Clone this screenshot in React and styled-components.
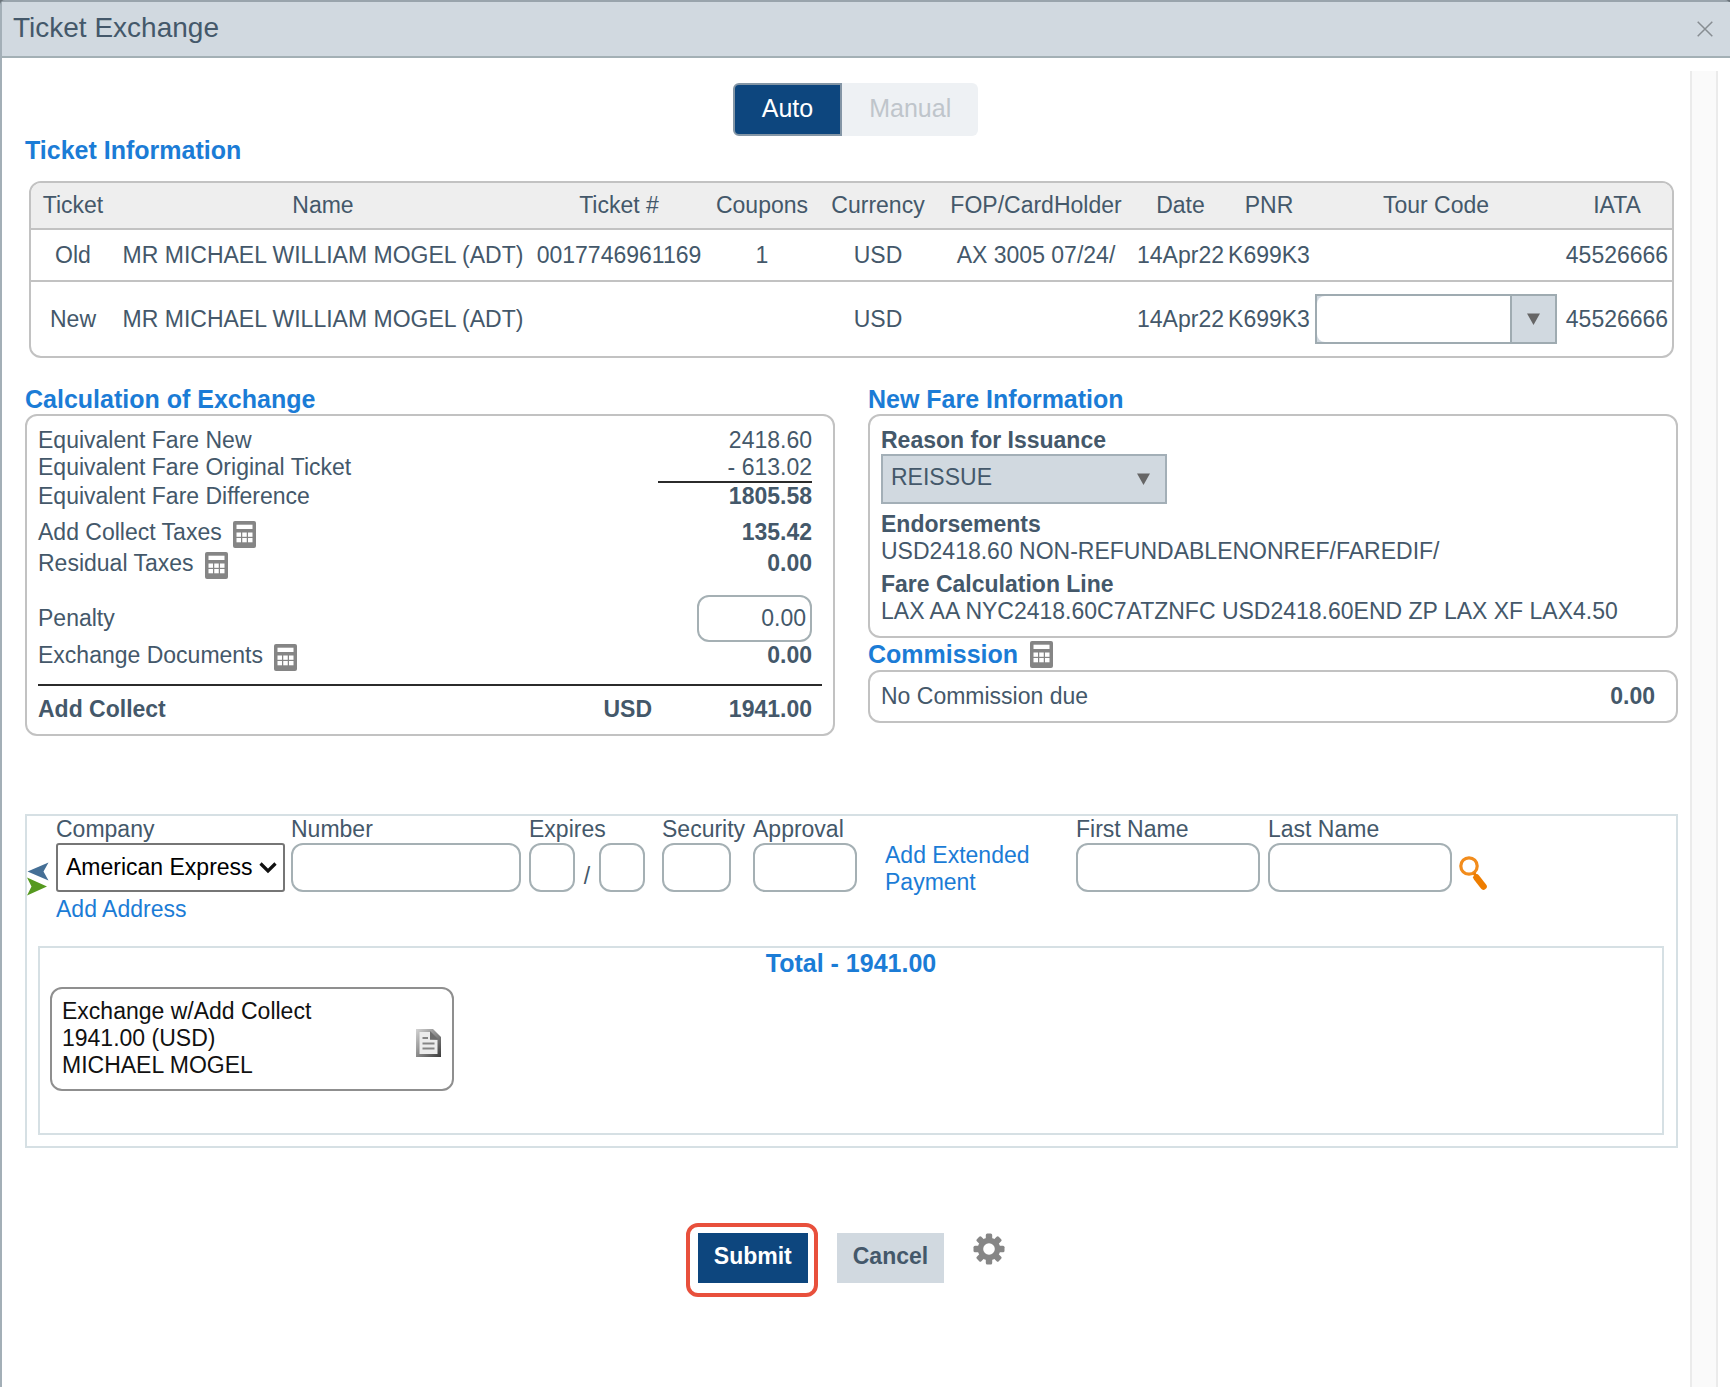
import React, { useState } from "react";
import styled, { createGlobalStyle } from "styled-components";

const ticketColumns = [
  { title: "Ticket", width: 84 },
  { title: "Name", width: 416 },
  { title: "Ticket #", width: 176 },
  { title: "Coupons", width: 110 },
  { title: "Currency", width: 122 },
  { title: "FOP/CardHolder", width: 194 },
  { title: "Date", width: 95 },
  { title: "PNR", width: 82 },
  { title: "Tour Code", width: 252 },
  { title: "IATA", width: 110 },
];

const CalculatorIcon = () => (
  <svg width="23" height="27" viewBox="0 0 23 27" aria-hidden="true">
    <rect width="23" height="27" rx="2" fill="#858585" />
    <rect x="3.5" y="3.7" width="16" height="4.3" fill="#fff" />
    {[11.5, 17].map((y) =>
      [3.5, 9.25, 15].map((x) => (
        <rect key={`${x}-${y}`} x={x} y={y} width="4.5" height="4.3" fill="#fff" />
      ))
    )}
  </svg>
);

const CloseIcon = () => (
  <svg width="16" height="16" viewBox="0 0 16 16" aria-hidden="true">
    <path d="M0.7 0.7 L15.3 15.3 M15.3 0.7 L0.7 15.3" stroke="#878d92" strokeWidth="1.5" />
  </svg>
);

const TriangleIcon = () => (
  <svg width="13" height="12" viewBox="0 0 13 12" aria-hidden="true">
    <path d="M0 0.5 H13 L6.5 12 Z" fill="#666" />
  </svg>
);

const ChevronIcon = () => (
  <svg width="18" height="12" viewBox="0 0 18 12" aria-hidden="true">
    <path d="M1.5 1.5 L9 9 L16.5 1.5" fill="none" stroke="#111" strokeWidth="3.2" />
  </svg>
);

const SwapIcon = () => (
  <svg width="22" height="34" viewBox="0 0 22 34" aria-hidden="true">
    <path d="M0.5 9.5 L21.5 0.5 L16.5 9.5 L21.5 18.5 Z" fill="#456f96" />
    <path d="M0 15.5 L20 24.5 L0 33.5 L4.5 24.5 Z" fill="#55991f" />
  </svg>
);

const SearchIcon = () => (
  <svg width="28" height="34" viewBox="0 0 28 34" aria-hidden="true">
    <circle cx="10" cy="10" r="8.2" fill="none" stroke="#f28c1c" strokeWidth="3.2" />
    <path d="M17.5 21.5 L24.5 30.5" stroke="#ee7d00" strokeWidth="6.5" strokeLinecap="round" />
    <path d="M15 17 L17.5 21" stroke="#ee7d00" strokeWidth="3" />
  </svg>
);

const DocumentIcon = () => (
  <svg width="25" height="28" viewBox="0 0 25 28" aria-hidden="true">
    <defs>
      <linearGradient id="page" x1="0" y1="0" x2="1" y2="1">
        <stop offset="0" stopColor="#d4d4d4" />
        <stop offset="0.5" stopColor="#8a8a8a" />
        <stop offset="1" stopColor="#3a3a3a" />
      </linearGradient>
    </defs>
    <path d="M0 0 H17 L25 8 V28 H0 Z" fill="url(#page)" />
    <path d="M3.5 3 H14 V11 H21.5 V25 H3.5 Z" fill="#ececec" />
    <path d="M14 2 L22 10 H14 Z" fill="#6d6d6d" />
    <path d="M6.5 9 H12 M6.5 14.5 H18.5 M6.5 19.5 H18.5" stroke="#858585" strokeWidth="2" />
  </svg>
);

const GearIcon = () => (
  <svg width="32" height="32" viewBox="-16 -16 32 32" aria-hidden="true">
    {[0, 45, 90, 135].map((angle) => (
      <rect
        key={angle}
        x="-3.2"
        y="-15.5"
        width="6.4"
        height="31"
        rx="1.5"
        fill="#868686"
        transform={`rotate(${angle})`}
      />
    ))}
    <circle r="11.3" fill="#868686" />
    <circle r="5.8" fill="#fff" />
  </svg>
);

const App = () => {
  const [penalty, setPenalty] = useState("0.00");

  return (
    <>
      <GlobalStyle />
      <Dialog>
        <Header>
          <Title>Ticket Exchange</Title>
          <IconButton aria-label="Close">
            <CloseIcon />
          </IconButton>
        </Header>
        <Body>
          <Content>
            <Toggle>
              <ToggleButton $active>Auto</ToggleButton>
              <ToggleButton disabled>Manual</ToggleButton>
            </Toggle>

            <Heading>Ticket Information</Heading>
            <TableFrame>
              <TicketTable>
                <colgroup>
                  {ticketColumns.map((col) => (
                    <col key={col.title} width={col.width} />
                  ))}
                </colgroup>
                <thead>
                  <tr>
                    {ticketColumns.map((col) => (
                      <th key={col.title}>{col.title}</th>
                    ))}
                  </tr>
                </thead>
                <tbody>
                  <TicketRow $height={52}>
                    <td>Old</td>
                    <td>MR MICHAEL WILLIAM MOGEL (ADT)</td>
                    <td>0017746961169</td>
                    <td>1</td>
                    <td>USD</td>
                    <td>AX 3005 07/24/</td>
                    <td>14Apr22</td>
                    <td>K699K3</td>
                    <td></td>
                    <td>45526666</td>
                  </TicketRow>
                  <TicketRow $height={75}>
                    <td>New</td>
                    <td>MR MICHAEL WILLIAM MOGEL (ADT)</td>
                    <td></td>
                    <td></td>
                    <td>USD</td>
                    <td></td>
                    <td>14Apr22</td>
                    <td>K699K3</td>
                    <td>
                      <Combo>
                        <ComboInput aria-label="Tour Code" />
                        <ComboButton aria-label="Show tour codes">
                          <TriangleIcon />
                        </ComboButton>
                      </Combo>
                    </td>
                    <td>45526666</td>
                  </TicketRow>
                </tbody>
              </TicketTable>
            </TableFrame>

            <Columns>
              <section>
                <Heading>Calculation of Exchange</Heading>
                <Panel>
                  <Row>
                    <span>Equivalent Fare New</span>
                    <span>2418.60</span>
                  </Row>
                  <Row>
                    <span>Equivalent Fare Original Ticket</span>
                    <span>- 613.02</span>
                  </Row>
                  <SumLine />
                  <Row>
                    <span>Equivalent Fare Difference</span>
                    <strong>1805.58</strong>
                  </Row>
                  <TaxRows>
                    <IconRow>
                      <WithIcon>
                        Add Collect Taxes
                        <IconButton aria-label="Add collect taxes calculator">
                          <CalculatorIcon />
                        </IconButton>
                      </WithIcon>
                      <strong>135.42</strong>
                    </IconRow>
                    <IconRow>
                      <WithIcon>
                        Residual Taxes
                        <IconButton aria-label="Residual taxes calculator">
                          <CalculatorIcon />
                        </IconButton>
                      </WithIcon>
                      <strong>0.00</strong>
                    </IconRow>
                  </TaxRows>
                  <PenaltyRow>
                    <label htmlFor="penalty">Penalty</label>
                    <PenaltyInput
                      id="penalty"
                      value={penalty}
                      onChange={(e) => setPenalty(e.target.value)}
                    />
                  </PenaltyRow>
                  <IconRow>
                    <WithIcon>
                      Exchange Documents
                      <IconButton aria-label="Exchange documents calculator">
                        <CalculatorIcon />
                      </IconButton>
                    </WithIcon>
                    <strong>0.00</strong>
                  </IconRow>
                  <TotalRow>
                    <TotalLabel>Add Collect</TotalLabel>
                    <span>USD</span>
                    <TotalValue>1941.00</TotalValue>
                  </TotalRow>
                </Panel>
              </section>

              <section>
                <Heading>New Fare Information</Heading>
                <Panel>
                  <FieldTitle as="label" htmlFor="reason">
                    Reason for Issuance
                  </FieldTitle>
                  <ReasonBox>
                    <ReasonSelect id="reason">
                      <option>REISSUE</option>
                    </ReasonSelect>
                    <SelectArrow $right={17}>
                      <TriangleIcon />
                    </SelectArrow>
                  </ReasonBox>
                  <FareText>
                    <FieldTitle>Endorsements</FieldTitle>
                    USD2418.60 NON-REFUNDABLENONREF/FAREDIF/
                  </FareText>
                  <FareText>
                    <FieldTitle>Fare Calculation Line</FieldTitle>
                    LAX AA NYC2418.60C7ATZNFC USD2418.60END ZP LAX XF LAX4.50
                  </FareText>
                </Panel>
                <CommissionHeading>
                  Commission
                  <IconButton aria-label="Commission calculator">
                    <CalculatorIcon />
                  </IconButton>
                </CommissionHeading>
                <Panel>
                  <Row>
                    <span>No Commission due</span>
                    <strong>0.00</strong>
                  </Row>
                </Panel>
              </section>
            </Columns>

            <Payment>
              <PaymentForm>
                <SwapButton aria-label="Swap payment">
                  <SwapIcon />
                </SwapButton>
                <Field>
                  <label htmlFor="company">Company</label>
                  <CompanyBox>
                    <CompanySelect id="company">
                      <option>American Express</option>
                    </CompanySelect>
                    <SelectArrow $right={8}>
                      <ChevronIcon />
                    </SelectArrow>
                  </CompanyBox>
                  <AddressLink href="#address">Add Address</AddressLink>
                </Field>
                <Field>
                  <label htmlFor="number">Number</label>
                  <TextInput id="number" $width={230} />
                </Field>
                <Field>
                  <label htmlFor="month">Expires</label>
                  <Expires>
                    <TextInput id="month" $width={46} />
                    <Slash>/</Slash>
                    <TextInput aria-label="Expires year" $width={46} />
                  </Expires>
                </Field>
                <Field>
                  <label htmlFor="security">Security</label>
                  <TextInput id="security" $width={69} />
                </Field>
                <Field>
                  <label htmlFor="approval">Approval</label>
                  <TextInput id="approval" $width={104} />
                </Field>
                <ExtendedLink href="#extended">
                  Add Extended
                  <br />
                  Payment
                </ExtendedLink>
                <Field>
                  <label htmlFor="first">First Name</label>
                  <TextInput id="first" $width={184} />
                </Field>
                <Field>
                  <label htmlFor="last">Last Name</label>
                  <TextInput id="last" $width={184} />
                </Field>
                <SearchButton aria-label="Search name">
                  <SearchIcon />
                </SearchButton>
              </PaymentForm>

              <Documents>
                <DocumentsTotal>Total - 1941.00</DocumentsTotal>
                <Card>
                  <div>
                    Exchange w/Add Collect
                    <br />
                    1941.00 (USD)
                    <br />
                    MICHAEL MOGEL
                  </div>
                  <CardButton aria-label="View document">
                    <DocumentIcon />
                  </CardButton>
                </Card>
              </Documents>
            </Payment>

            <Actions>
              <Highlight>
                <ActionButton $primary>Submit</ActionButton>
              </Highlight>
              <ActionButton>Cancel</ActionButton>
              <IconButton aria-label="Settings">
                <GearIcon />
              </IconButton>
            </Actions>
          </Content>
          <ScrollTrack />
        </Body>
      </Dialog>
    </>
  );
};

const GlobalStyle = createGlobalStyle`
  * {
    box-sizing: border-box;
  }
  body {
    margin: 0;
    background-color: #6c757c;
    color: #44586a;
    font-family: "Liberation Sans", Arial, Helvetica, sans-serif;
    font-size: 23px;
    line-height: 27px;
  }
  button, input, select {
    margin: 0;
    font: inherit;
    color: inherit;
  }
  svg {
    display: block;
  }
  a {
    color: #1b7cd6;
    text-decoration: none;
  }
`;

const Dialog = styled.div`
  display: flex;
  flex-direction: column;
  min-height: 100vh;
  border-top: 2px solid #99a4ac;
  border-left: 2px solid #a3afb7;
  border-radius: 5px 5px 0 0;
  background-color: #fff;
`;

const Header = styled.header`
  display: flex;
  justify-content: space-between;
  align-items: center;
  height: 56px;
  padding: 0 17px 0 11px;
  border-bottom: 2px solid #a3b0b5;
  background-color: #d1d9e0;
`;

const Title = styled.h1`
  margin: 0;
  padding-bottom: 4px;
  font-size: 28px;
  font-weight: 400;
  line-height: 31px;
`;

const IconButton = styled.button`
  flex: none;
  padding: 0;
  border: 0;
  background: none;
  cursor: pointer;
`;

const Body = styled.div`
  display: flex;
  flex: 1;
`;

const Content = styled.main`
  flex: 1;
  min-width: 0;
  padding: 25px 12px 0 23px;
`;

const ScrollTrack = styled.div`
  width: 28px;
  margin: 13px 12px 0 0;
  border: 1px solid #ebebeb;
  border-width: 0 2px;
  background-color: #fafafa;
`;

const Toggle = styled.div`
  display: flex;
  justify-content: center;
  padding-left: 8px;
`;

const ToggleButton = styled.button`
  height: 53px;
  padding: 0 27px 2px;
  border: ${(props) => (props.$active ? "2px solid #8496a6" : "0")};
  border-radius: ${(props) => (props.$active ? "6px 0 0 6px" : "0 6px 6px 0")};
  background-color: ${(props) => (props.$active ? "#0d467e" : "#eef1f4")};
  color: ${(props) => (props.$active ? "#fff" : "#bfc5cb")};
  font-size: 25px;
`;

const Heading = styled.h2`
  margin: 0;
  color: #1b7cd6;
  font-size: 25px;
  font-weight: 700;
  line-height: 29px;
`;

const TableFrame = styled.div`
  margin: 16px 4px 27px;
  border: 2px solid #c2c2c2;
  border-radius: 12px;
  overflow: hidden;
`;

const TicketTable = styled.table`
  width: 100%;
  table-layout: fixed;
  border-collapse: collapse;
  white-space: nowrap;
  text-align: center;

  th {
    height: 46px;
    padding: 0;
    background-color: #eee;
    font-weight: 400;
  }

  td {
    padding: 0;
  }
`;

const TicketRow = styled.tr`
  height: ${(props) => props.$height}px;
  border-top: 2px solid #c2c2c2;
`;

const Combo = styled.div`
  display: flex;
  height: 50px;
  margin: 0 5px;
  border: 2px solid #9fabb1;
  background-color: #d1d9e0;
`;

const ComboInput = styled.input`
  flex: 1;
  min-width: 0;
  border: 0;
  border-radius: 8px 0 0 8px;
  background-color: #fff;
`;

const ComboButton = styled.button`
  display: flex;
  justify-content: center;
  align-items: center;
  width: 45px;
  padding: 0;
  border: 0;
  border-left: 2px solid #9fabb1;
  background: none;
`;

const Columns = styled.div`
  display: grid;
  grid-template-columns: 1fr 1fr;
  gap: 33px;
  align-items: start;
`;

const Panel = styled.div`
  padding: 11px;
  border: 2px solid #c2c2c2;
  border-radius: 12px;
`;

const Row = styled.div`
  display: flex;
  justify-content: space-between;
  padding-right: 10px;
`;

const IconRow = styled(Row)`
  height: 31px;
`;

const WithIcon = styled.span`
  display: flex;
  gap: 11px;
  align-items: flex-start;

  button {
    padding-top: 2px;
  }
`;

const SumLine = styled.div`
  width: 154px;
  height: 2px;
  margin: 0 10px 0 auto;
  background-color: #2b2b2b;
`;

const TaxRows = styled.div`
  padding: 9px 0 14px;
`;

const PenaltyRow = styled(Row)`
  align-items: center;
`;

const PenaltyInput = styled.input`
  width: 115px;
  height: 47px;
  padding: 0 4px;
  border: 2px solid #a5b0b4;
  border-radius: 12px;
  text-align: right;
`;

const TotalRow = styled.div`
  display: flex;
  margin-top: 11px;
  padding: 10px 10px 0 0;
  border-top: 2px solid #2b2b2b;
  font-weight: 700;
`;

const TotalLabel = styled.span`
  flex: 1;
`;

const TotalValue = styled.span`
  width: 160px;
  text-align: right;
`;

const FieldTitle = styled.div`
  display: block;
  font-weight: 700;
`;

const ReasonBox = styled.div`
  position: relative;
  width: 286px;
  margin-bottom: 7px;
`;

const ReasonSelect = styled.select`
  display: block;
  appearance: none;
  width: 100%;
  height: 50px;
  padding: 0 40px 4px 8px;
  border: 2px solid #a3afb7;
  border-radius: 0;
  background-color: #d1d9e0;
`;

const SelectArrow = styled.span`
  position: absolute;
  top: 0;
  right: ${(props) => props.$right}px;
  display: flex;
  align-items: center;
  height: 100%;
  pointer-events: none;
`;

const FareText = styled.div`
  & + & {
    margin-top: 6px;
  }
`;

const CommissionHeading = styled(Heading)`
  display: flex;
  align-items: center;
  gap: 12px;
  height: 32px;
`;

const Payment = styled.section`
  margin-top: 78px;
  padding-bottom: 11px;
  border: 2px solid #d6e0e4;
`;

const PaymentForm = styled.form`
  display: grid;
  grid-template-columns: 29px 235px 238px 133px 91px 132px 191px 192px 191px auto;
  justify-content: start;
  align-items: start;
  min-height: 130px;
`;

const Field = styled.div`
  display: flex;
  flex-direction: column;
  align-items: flex-start;
`;

const TextInput = styled.input`
  width: ${(props) => props.$width}px;
  height: 49px;
  padding: 0 8px;
  border: 2px solid #a5b0b4;
  border-radius: 12px;
  background-color: #fff;
`;

const CompanyBox = styled.div`
  position: relative;
  width: 229px;
`;

const CompanySelect = styled.select`
  display: block;
  appearance: none;
  width: 100%;
  height: 49px;
  padding: 0 30px 0 8px;
  border: 2px solid #767676;
  border-radius: 3px;
  background-color: #fff;
  color: #000;
`;

const Expires = styled.div`
  display: flex;
  align-items: center;
`;

const Slash = styled.span`
  width: 24px;
  padding-top: 17px;
  text-align: center;
`;

const SwapButton = styled(IconButton)`
  justify-self: start;
  padding-top: 46px;
`;

const SearchButton = styled(IconButton)`
  padding-top: 40px;
`;

const AddressLink = styled.a`
  padding-top: 4px;
`;

const ExtendedLink = styled.a`
  padding-top: 26px;
`;

const Documents = styled.div`
  min-height: 189px;
  margin: 0 12px 0 11px;
  padding: 1px 10px;
  border: 2px solid #d6e0e4;
`;

const DocumentsTotal = styled(Heading)`
  text-align: center;
`;

const Card = styled.div`
  display: flex;
  justify-content: space-between;
  align-items: center;
  width: 404px;
  margin-top: 9px;
  padding: 9px 11px 10px 10px;
  border: 2px solid #8f8f8f;
  border-radius: 12px;
  color: #111;
`;

const CardButton = styled(IconButton)`
  padding-top: 8px;
`;

const Actions = styled.div`
  display: flex;
  justify-content: center;
  align-items: flex-start;
  gap: 29px;
  padding: 85px 0 60px;
`;

// red ring drawn around the primary action
const Highlight = styled.div`
  position: relative;

  &::after {
    content: "";
    position: absolute;
    inset: -10px -10px -14px -12px;
    border: 4px solid #e8503c;
    border-radius: 12px;
    pointer-events: none;
  }
`;

const ActionButton = styled.button`
  height: 50px;
  padding: 0 16px 4px;
  border: 0;
  background-color: ${(props) => (props.$primary ? "#0d467e" : "#d1d9e0")};
  color: ${(props) => (props.$primary ? "#fff" : "#44586a")};
  font-weight: 700;
`;

export default App;
